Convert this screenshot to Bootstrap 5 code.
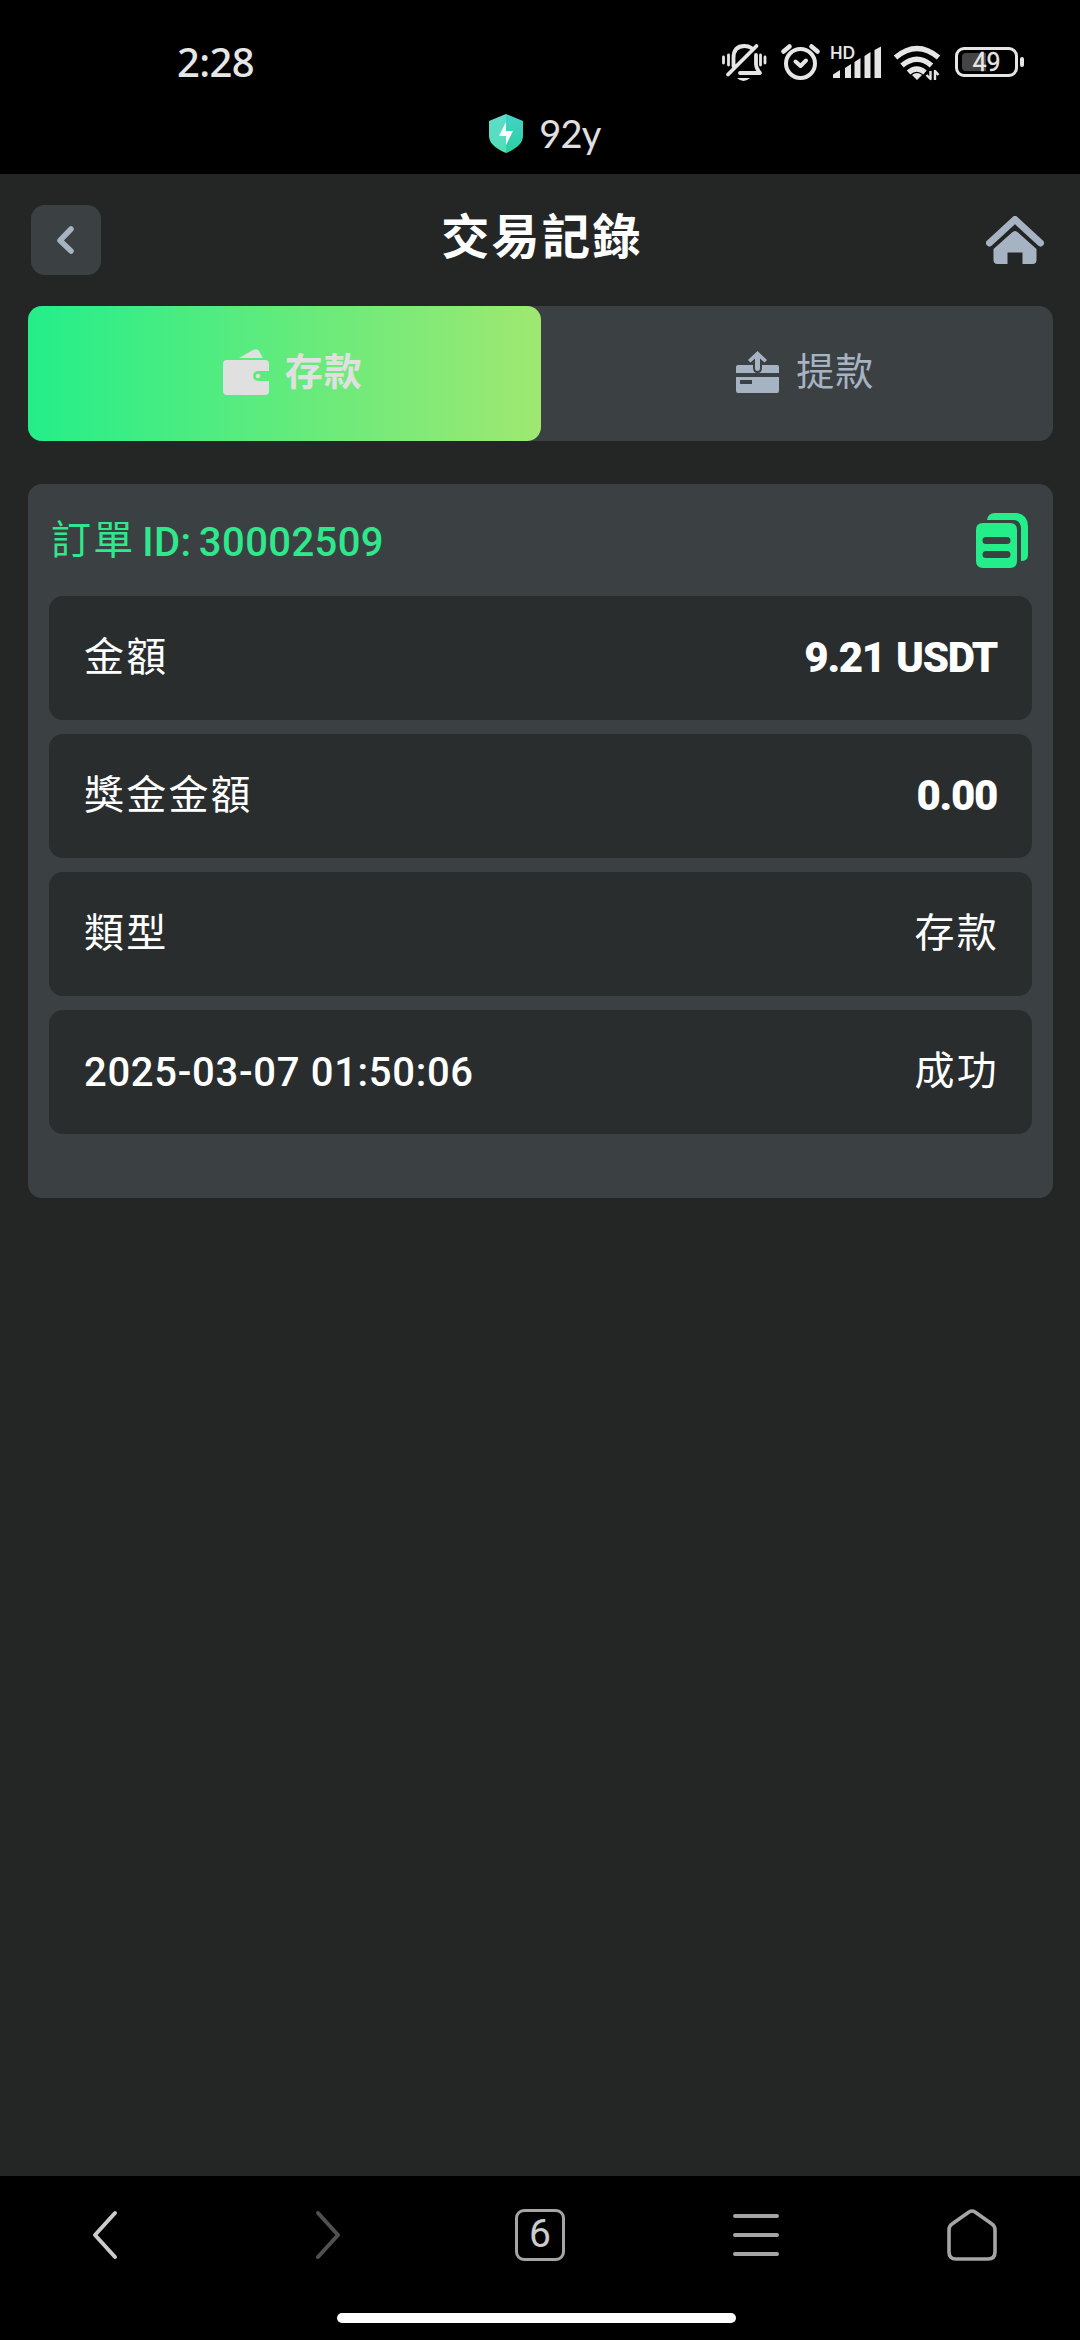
<!DOCTYPE html>
<html lang="zh-Hant">
<head>
<meta charset="utf-8">
<meta name="viewport" content="width=device-width, initial-scale=1">
<title>交易記錄</title>
<link href="https://cdn.jsdelivr.net/npm/bootstrap@5.3.0/dist/css/bootstrap.min.css" rel="stylesheet">
<style>
  body { background: #242626; color: #fff; font-family: Roboto, "Noto Sans CJK TC", sans-serif; font-size: 40px; line-height: 1; min-height: 2340px; }
  svg { display: block; flex: none; }
  .status-top { height: 84px; padding: 40px 56px 0 177px; color: #e6e6e6; }
  .clock { font: 500 40px/1 "Noto Sans", sans-serif; letter-spacing: -.6px; }
  .site-line { height: 90px; padding: 8px 0 0 10px; gap: 16px; color: #e0e0e0; }
  .site-line span { font: 400 38px/1 Lato, sans-serif; letter-spacing: -.8px; }
  .page-head { height: 132px; padding: 0 36px 0 31px; }
  .page-head h1 { font-size: 48px; font-weight: 700; letter-spacing: 2.4px; line-height: 1; padding: 0 3px 4px 0; }
  .back-btn { width: 70px; height: 70px; border-radius: 14px; background: #3b4042; }
  .tab-strip { margin: 0 27px 0 28px; height: 135px; background: #3b4042; border-radius: 14px; }
  .tab-strip .nav-link { color: #a6b3c3; font-size: 38px; letter-spacing: 1px; border-radius: 14px; padding: 0 0 3px 17px; }
  .tab-strip .nav-link.active { background: linear-gradient(90deg, #24ee89, #9fe871); color: #e0e0e0; font-weight: 700; }
  .order-panel { margin: 43px 27px 0 28px; padding: 0 21px 64px; background: #3b4042; border-radius: 14px; }
  .order-head { height: 112px; color: #2fe88c; padding: 0 4px 0 2px; }
  .order-label { padding-top: 4px; }
  .detail-list { gap: 14px; }
  .cjk { letter-spacing: 2.2px; }
  .latin { font-weight: 500; letter-spacing: .7px; }
  .order-no { letter-spacing: .4px; word-spacing: -3px; margin-left: -3px; vertical-align: -2px; }
  .stamp { padding-top: 2px; }
  .detail { height: 124px; padding: 0 35px; border-radius: 14px; background: #292d2e; }
  .detail .cjk:last-child { margin-right: -2px; }
  .amount { font-weight: 900; font-size: 42px; letter-spacing: -1.3px; word-spacing: 2px; }
  .browser-bar { height: 164px; background: #000; }
  .browser-bar .tools { height: 117px; }
  .go-back { margin-right: 6px; }
  .go-forward { margin-left: 8px; }
  .tab-count { width: 50px; height: 52px; border: 3.5px solid #a5a5a5; border-radius: 9px; color: #ccc; font: 400 39px/1 Roboto, sans-serif; }
  .handle-row { padding: 20px 7px 0 0; }
  .handle { width: 399px; height: 10px; border-radius: 5px; background: #fff; }
</style>
</head>
<body class="d-flex flex-column">
<header class="bg-black">
  <div class="status-top d-flex align-items-center justify-content-between">
    <span class="clock">2:28</span>
    <svg width="304" height="44" viewBox="720 40 304 44" fill="none" stroke="#e6e6e6" stroke-linecap="round" stroke-linejoin="round">
      <!-- muted bell -->
      <g stroke-width="3.8">
        <path d="M733.500 66V58q0-12 11-12 4 0 7 2M756 55v9q0 4 4 9h-20M728 74.500L756.500 46"/>
        <path d="M723.500 57v6M728.500 55v10M760.500 55v10M765 57v6" stroke-width="2.800"/>
        <path d="M737 78h13q-6.500 6-13 0z" fill="#e6e6e6" stroke="none"/>
      </g>
      <!-- alarm clock -->
      <g stroke-width="4"><circle cx="800.500" cy="63.500" r="14.500"/><path d="M795.500 61.500l5 4.500 5.500-5.500"/><path d="M783.500 51.500l6-5M817.500 51.500l-6-5" stroke-width="4.600"/></g>
      <!-- signal -->
      <g fill="#e6e6e6" stroke="none"><text x="830" y="58.500" font-family="Lato" font-weight="700" font-size="16.500" textLength="25" lengthAdjust="spacingAndGlyphs">HD</text>
      <path d="M833 78v-3.500l7-4.500v8zM845 78V68l6-4v14zM854.500 78V62l6-4v20zM864.500 78V56l6-4v26zM874.500 78V50l6.500-3.500V78z"/></g>
      <!-- wifi -->
      <g stroke-width="5.400" stroke-linecap="butt"><path d="M895.500 57.500q21.500-18 43 0M902 65.500q15-12.500 29.500 0M908.500 72.500q8-7 16.500 0"/><path d="M912 75q5-4 10 0l-5 5z" fill="#e6e6e6" stroke="none"/><path d="M930.500 71v8l-4-4M935 80v-9l3.500 4" stroke-width="2.400"/></g>
      <!-- battery -->
      <rect x="956.500" y="48.500" width="60" height="27" rx="7.500" stroke-width="3"/>
      <path d="M986 53v18h-20q-4 0-4-4V57q0-4 4-4z" fill="#444" stroke="none"/>
      <path d="M1022 59v6" stroke-width="4"/>
      <text x="972.500" y="71" font-family="Roboto" font-weight="400" font-size="25" fill="#e6e6e6" stroke="#e6e6e6" stroke-width=".3">49</text>
    </svg>
  </div>
  <div class="site-line d-flex align-items-center justify-content-center">
    <svg width="34" height="39" viewBox="0 0 34 39"><defs><linearGradient id="sl" x2="0" y2="1"><stop stop-color="#5fdccb"/><stop offset="1" stop-color="#50dfb4"/></linearGradient><linearGradient id="sr" x2="0" y2="1"><stop stop-color="#45d2c8"/><stop offset="1" stop-color="#2bd0a0"/></linearGradient></defs>
      <path d="M17 0L0 7v15q0 10 17 17z" fill="url(#sl)"/><path d="M17 0l17 7v15q0 10-17 17z" fill="url(#sr)"/><path d="M17 8L10 22h7v9l7-14h-7z" fill="#fff"/></svg>
    <span>92y</span>
  </div>
</header>

<div class="page-head d-flex align-items-center justify-content-between">
  <button class="back-btn btn p-0 border-0 d-flex align-items-center justify-content-center" aria-label="返回">
    <svg width="20" height="32" viewBox="0 0 20 32" fill="none" stroke="#a6b3c3" stroke-width="5.500" stroke-linecap="round" stroke-linejoin="round"><path d="M15 5L4 16.500 15 27"/></svg>
  </button>
  <h1 class="m-0">交易記錄</h1>
  <svg width="58" height="48" viewBox="0 0 58 48"><path d="M3.500 27L29 3.500 54.500 27" fill="none" stroke="#a6b3c3" stroke-width="7" stroke-linecap="round" stroke-linejoin="round"/><path d="M26 16.500q3-3 6 0L50.500 33v11q0 4-4 4H36.500V36.500h-15V48h-10q-4 0-4-4V33z" fill="#a6b3c3"/></svg>
</div>

<nav class="tab-strip nav nav-pills nav-fill flex-nowrap">
  <a class="nav-link active w-50 d-flex align-items-center justify-content-center">
    <svg class="me-3" width="46" height="46" viewBox="0 0 46 46" fill="#e0e0e0"><path d="M16 9L30 1q4-2 6 1l4 7zM4 11h38q4 0 4 4v7H35a5 5 0 0 0 0 10h11v10q0 4-4 4H4q-4 0-4-4V15q0-4 4-4z"/><circle cx="35" cy="27" r="2.300"/></svg>
    <span>存款</span>
  </a>
  <a class="nav-link w-50 d-flex align-items-center justify-content-center">
    <svg class="me-3" width="44" height="42" viewBox="0 0 44 42" fill="#a6b3c3"><path d="M2 14h15v3q0 5 4.500 5t4.500-5v-3h15q2 0 2 2v6H0v-6q0-2 2-2zM0 26h43v14q0 2-2 2H2q-2 0-2-2zM4 29v4h12v-4z" fill-rule="evenodd"/><path d="M21.500 0L31 9l-2.500 2.500-4.500-4V17q0 3-2.500 3T19 17V7.500l-4.500 4L12 9z"/></svg>
    <span>提款</span>
  </a>
</nav>

<main class="order-panel">
  <div class="order-head d-flex align-items-center justify-content-between">
    <div class="order-label"><span class="cjk">訂單</span> <span class="latin order-no">ID: 30002509</span></div>
    <svg width="52" height="55" viewBox="0 0 52 55" fill="#24ee89"><path d="M11 7q1-7 8-7h22q11 2 11 13v29q0 6-7 6V16q0-9-8-9z"/><path d="M7 10h27q7 0 7 7v31q0 7-7 7H7q-7 0-7-7V17q0-7 7-7zM10 24a3.500 3.500 0 0 0 0 7h21a3.500 3.500 0 0 0 0-7zM10 38a3.500 3.500 0 0 0 0 7h21a3.500 3.500 0 0 0 0-7z" fill-rule="evenodd"/></svg>
  </div>
  <div class="detail-list d-flex flex-column">
    <div class="detail d-flex align-items-center justify-content-between"><span class="cjk">金額</span><span class="amount">9.21 USDT</span></div>
    <div class="detail d-flex align-items-center justify-content-between"><span class="cjk">獎金金額</span><span class="amount">0.00</span></div>
    <div class="detail d-flex align-items-center justify-content-between"><span class="cjk">類型</span><span class="cjk">存款</span></div>
    <div class="detail d-flex align-items-center justify-content-between"><span class="latin stamp">2025-03-07 01:50:06</span><span class="cjk">成功</span></div>
  </div>
</main>

<footer class="browser-bar mt-auto">
  <div class="tools d-flex align-items-center">
    <div class="col d-flex justify-content-center"><svg class="go-back" width="30" height="52" viewBox="0 0 30 52" fill="none" stroke="#ccc" stroke-width="4" stroke-linecap="round" stroke-linejoin="round"><path d="M25 4L5 26l20 22"/></svg></div>
    <div class="col d-flex justify-content-center"><svg class="go-forward" width="30" height="52" viewBox="0 0 30 52" fill="none" stroke="#505050" stroke-width="4" stroke-linecap="round" stroke-linejoin="round"><path d="M5 4l20 22L5 48"/></svg></div>
    <div class="col d-flex justify-content-center"><div class="tab-count d-flex align-items-center justify-content-center">6</div></div>
    <div class="col d-flex justify-content-center"><svg width="46" height="44" viewBox="0 0 46 44" stroke="#a5a5a5" stroke-width="4" stroke-linecap="round"><path d="M2 3h42M2 22h42M2 41h42"/></svg></div>
    <div class="col d-flex justify-content-center"><svg width="50" height="52" viewBox="0 0 50 52" fill="none" stroke="#a5a5a5" stroke-width="3.600"><path d="M22 3q3-2 6 0l17 12q3 2 3 6v22q0 7-7 7H9q-7 0-7-7V21q0-4 3-6z"/></svg></div>
  </div>
  <div class="handle-row d-flex justify-content-center"><div class="handle"></div></div>
</footer>
<script src="https://cdn.jsdelivr.net/npm/bootstrap@5.3.0/dist/js/bootstrap.bundle.min.js"></script>
</body>
</html>
